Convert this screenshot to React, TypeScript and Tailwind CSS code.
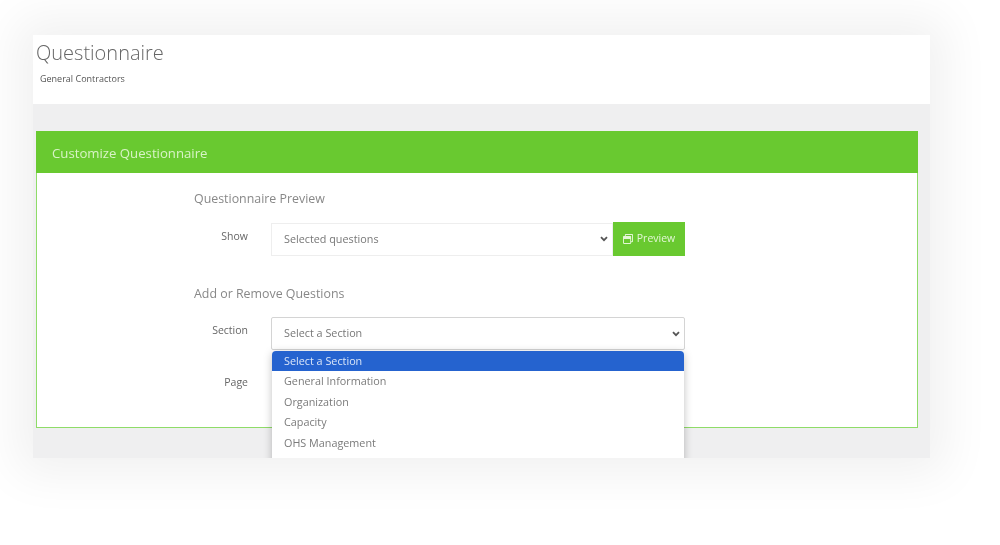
import { FaRegWindowRestore } from "react-icons/fa";

const options = ["General Information", "Organization", "Capacity", "OHS Management"];

function Chevron() {
    return (
        <svg className="w-[8px] h-[6px] text-[#555]" viewBox="0 0 8 6" fill="none" stroke="currentColor" strokeWidth="1.8">
            <path d="M1 1.2l3 3 3-3" />
        </svg>
    );
}

export default function App() {
    return (
        <div className="w-[1000px] h-[545px] bg-white overflow-hidden pt-[35px] pl-[33px] font-['Open_Sans',sans-serif] blur-[0.6px]">
            <div className="w-[897px] h-[423px] bg-[#efeff0] overflow-hidden shadow-[0_0_45px_16px_rgba(0,0,0,0.06)]">
                <div className="h-[69px] bg-white pl-[3px] pt-[3px]">
                    <h1 className="text-[20px] leading-[29px] font-light text-[#666]">Questionnaire</h1>
                    <p className="text-[9px] leading-[12px] mt-[6px] ml-[4px] text-[#555]">General Contractors</p>
                </div>

                <div className="ml-[3px] mt-[27px] w-[882px] h-[297px] bg-white border border-[#8fdc68] border-t-0">
                    <div className="h-[42px] -mx-px bg-[#69c930] flex items-center pl-[16px] pt-[3px] text-[13.2px] text-[#d8f3c6]">
                        Customize Questionnaire
                    </div>

                    <div className="ml-[157px] pt-[11px]">
                        <h2 className="text-[12.4px] leading-[30px] h-[30px] text-[#888]">Questionnaire Preview</h2>
                        <div className="flex items-center mt-[8px]">
                            <label className="w-[77px] pr-[23px] text-right text-[10.5px] text-[#666] -mt-[5px]">Show</label>
                            <div className="w-[342px] h-[33px] border border-[#eeeeee] flex items-center justify-between pl-[12px] pr-[4px] text-[10.8px] text-[#777]">
                                <span>Selected questions</span>
                                <Chevron />
                            </div>
                            <button className="w-[72px] h-[34px] bg-[#69c930] flex items-center justify-center gap-[4px] text-[10.5px] text-[#e3f6d6]">
                                <FaRegWindowRestore className="w-[10px] h-[10px]" />
                                Preview
                            </button>
                        </div>

                        <h2 className="text-[12.4px] leading-[30px] h-[30px] mt-[23px] text-[#888]">Add or Remove Questions</h2>
                        <div className="flex items-start mt-[8px]">
                            <label className="w-[77px] pr-[23px] text-right text-[10.5px] leading-[26px] text-[#666]">Section</label>
                            <div className="relative w-[414px]">
                                <div className="h-[33px] border border-[#d4d4d4] rounded-[2px] flex items-center justify-between pl-[12px] pr-[4px] text-[10.8px] text-[#777]">
                                    <span>Select a Section</span>
                                    <Chevron />
                                </div>
                                <div className="absolute left-[1px] top-[34px] w-[412px] h-[120px] bg-white shadow-[0_2px_8px_rgba(0,0,0,0.25)] rounded-t-[4px] text-[10.8px]">
                                    <div className="h-[20px] bg-[#2563cf] rounded-t-[4px] pl-[12px] leading-[20px] text-[#dbe6f8]">Select a Section</div>
                                    {options.map((o) => (
                                        <div key={o} className="h-[20.5px] pl-[12px] leading-[20.5px] text-[#7a7a7a]">{o}</div>
                                    ))}
                                </div>
                            </div>
                        </div>
                        <div className="flex mt-[25px]">
                            <label className="w-[77px] pr-[23px] text-right text-[10.5px] leading-[14px] text-[#666]">Page</label>
                        </div>
                    </div>
                </div>
            </div>
        </div>
    );
}
